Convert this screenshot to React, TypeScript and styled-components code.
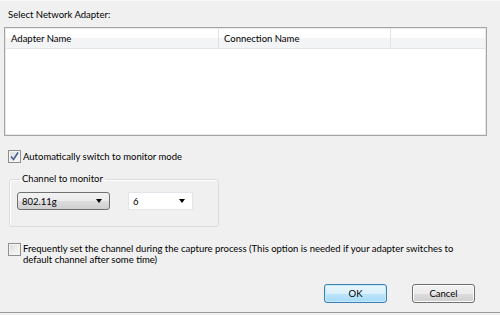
import React from "react"
import styled, { createGlobalStyle } from "styled-components"

const GlobalStyle = createGlobalStyle`
	html, body {
		margin: 0;
		padding: 0;
		background: #f0f0f0;
	}
	body {
		font-family: Lato, "Noto Sans", sans-serif;
		font-size: 9.5px;
		color: #000;
	}
`

const Dialog = styled.div`
	width: 500px;
	height: 313px;
	box-sizing: border-box;
	border-top: 1px solid #f8f8f8;
	border-bottom: 1px solid #9a9a9a;
	background: #f0f0f0;
	padding: 7px 13px 0 4px;
	display: flex;
	flex-direction: column;
`

const Label = styled.div`
	margin-left: 4px;
	height: 19px;
	line-height: 14px;
`

const ListView = styled.div`
	height: 109px;
	border: 1px solid #a5a5a5;
	box-shadow: inset 0 0 0 1px #e8e8e8;
	background: #fff;
	padding: 1px;
	box-sizing: border-box;
`

const Header = styled.div`
	display: grid;
	grid-template-columns: 213px 172px 1fr;
	height: 20px;
	border-bottom: 1px solid #e3e5e8;
	background: linear-gradient(#ffffff 0%, #ffffff 45%, #f3f4f6 46%, #f3f4f6 100%);
	box-sizing: border-box;
`

const HeaderCell = styled.div<{ $last?: boolean }>`
	padding-left: 5px;
	line-height: 19px;
	border-right: ${(p) => (p.$last ? "none" : "1px solid #e0e2e5")};
	white-space: nowrap;
	overflow: hidden;
`

const CheckRow = styled.label<{ $top: number }>`
	display: flex;
	align-items: flex-start;
	gap: 2px;
	margin-top: ${(p) => p.$top}px;
	margin-left: 4px;
	line-height: 11px;
`

const Box = styled.span`
	flex: none;
	width: 13px;
	height: 13px;
	box-sizing: border-box;
	border: 1px solid #8e8f8f;
	background: linear-gradient(135deg, #dcdcdc, #fbfbfb);
	box-shadow: inset 0 0 0 1px #f4f4f4;
	display: flex;
	align-items: center;
	justify-content: center;
`

const CheckText = styled.span<{ $pad?: number }>`
	padding-top: ${(p) => p.$pad ?? 1}px;
`

const Group = styled.fieldset`
	margin: 10px 0 0 5px;
	width: 210px;
	height: 54px;
	box-sizing: border-box;
	border: 1px solid #dcdcdc;
	border-radius: 3px;
	box-shadow: inset 1px 1px 0 #fff;
	padding: 7px 0 0 7px;
	display: flex;
	align-items: flex-start;
	gap: 18px;
`

const Legend = styled.legend`
	padding: 0 2px;
	margin-left: 3px;
	line-height: 12px;
`

const Combo = styled.div<{ $flat?: boolean; $w: number }>`
	width: ${(p) => p.$w}px;
	height: 18px;
	box-sizing: border-box;
	display: flex;
	align-items: center;
	justify-content: space-between;
	padding: 0 7px 0 4px;
	border-radius: ${(p) => (p.$flat ? "0" : "3px")};
	border: 1px solid ${(p) => (p.$flat ? "#e2e6ea" : "#707070")};
	background: ${(p) =>
		p.$flat
			? "#fff"
			: "linear-gradient(#f2f2f2 0%, #ebebeb 50%, #dddddd 51%, #cfcfcf 100%)"};
`

const Arrow = styled.span`
	width: 0;
	height: 0;
	border-left: 3.5px solid transparent;
	border-right: 3.5px solid transparent;
	border-top: 4px solid #000;
`

const Footer = styled.div`
	margin-top: auto;
	margin-bottom: 9px;
	display: flex;
	justify-content: flex-end;
	gap: 25px;
	padding-right: 12px;
`

const Button = styled.button<{ $focus?: boolean }>`
	width: 63px;
	height: 19px;
	font: inherit;
	padding: 0;
	border-radius: 3px;
	border: 1px solid ${(p) => (p.$focus ? "#3c7fb1" : "#707070")};
	background: ${(p) =>
		p.$focus
			? "linear-gradient(#eaf6fd 0%, #d9f0fc 50%, #bee6fd 51%, #a7d9f5 100%)"
			: "linear-gradient(#f2f2f2 0%, #ebebeb 50%, #dddddd 51%, #cfcfcf 100%)"};
	box-shadow: inset 0 0 0 1px ${(p) => (p.$focus ? "#c5eafc" : "#fcfcfc")};
	color: #000;
`

const Check = () => (
	<svg width="9" height="9" viewBox="0 0 9 9">
		<path d="M1 4.5 L3.5 7.5 L8 0.5" fill="none" stroke="#4a5e98" strokeWidth="1.6" />
	</svg>
)

const App = () => (
	<>
		<GlobalStyle />
		<Dialog>
			<Label>Select Network Adapter:</Label>
			<ListView>
				<Header>
					<HeaderCell>Adapter Name</HeaderCell>
					<HeaderCell>Connection Name</HeaderCell>
					<HeaderCell $last />
				</Header>
			</ListView>
			<CheckRow $top={14}>
				<Box>
					<Check />
				</Box>
				<CheckText>Automatically switch to monitor mode</CheckText>
			</CheckRow>
			<Group>
				<Legend>Channel to monitor</Legend>
				<Combo $w={93}>
					802.11g
					<Arrow />
				</Combo>
				<Combo $w={65} $flat>
					6
					<Arrow />
				</Combo>
			</Group>
			<CheckRow $top={16}>
				<Box />
				<CheckText $pad={0}>
					Frequently set the channel during the capture process (This option is needed if your
					adapter switches to
					<br />
					default channel after some time)
				</CheckText>
			</CheckRow>
			<Footer>
				<Button $focus>OK</Button>
				<Button>Cancel</Button>
			</Footer>
		</Dialog>
	</>
)

export default App
